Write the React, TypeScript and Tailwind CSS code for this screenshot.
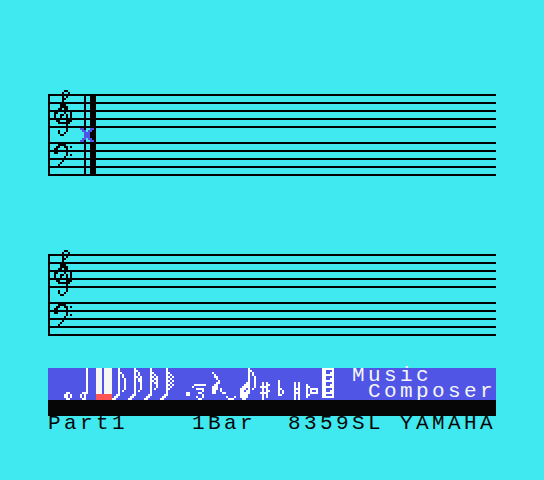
const Pixels = ({ col, row, rows, fill = "#ffffff" }: { col: number; row: number; rows: string[]; fill?: string }) => (
  <>
    {rows.flatMap((line, r) =>
      line.split("").map((ch, c) =>
        ch === "#" ? <rect key={`${r}-${c}`} x={(col + c) * 2} y={(row + r) * 2} width="2" height="2" fill={fill} /> : null
      )
    )}
  </>
)

const treble = [
  ".....##.",
  "....#..#",
  "....#..#",
  "....#.#.",
  "....##..",
  "....#...",
  "...##...",
  "...###..",
  "...####.",
  "..##.##.",
  ".##..#.#",
  "##...#..#",
  "#..##.#.#",
  "#..#..#.#",
  "##.#..#.#",
  ".##...###",
  "..######.",
  "......#.",
  "......#.",
  "......#.",
  "..#...#.",
  "..#..#..",
  "...##...",
]

const bass = [
  "...###..",
  "..####..",
  ".##..##.#",
  "##....#.",
  "##....#.",
  "##....#.",
  "......#.#",
  ".....#..",
  "....#...",
  "....#...",
  "...#....",
  "..#.....",
]

function Staff({ children }: { children?: React.ReactNode }) {
  const lines = [0, 1, 2, 3, 4]
  return (
    <div className="relative flex w-[448px] flex-col gap-[14px] border-l-2 border-black">
      {[0, 1].map((g) => (
        <div key={g} className="flex flex-col gap-[6px]">
          {lines.map((l) => (
            <div key={l} className="h-[2px] bg-black" />
          ))}
        </div>
      ))}
      <svg className="absolute left-[-2px] top-[-4px]" width="60" height="92" viewBox="0 0 60 92" shapeRendering="crispEdges">
        <Pixels col={3} row={0} rows={treble} fill="#000000" />
        <Pixels col={3} row={26} rows={bass} fill="#000000" />
      </svg>
      {children}
    </div>
  )
}

function NotePalette() {
  return (
    <svg width="304" height="32" viewBox="0 0 304 32" shapeRendering="crispEdges">
      <Pixels col={8} row={12} rows={[".##.", "##.#", "##.#", ".##."]} />
      <Pixels col={16} row={0} rows={[...Array(12).fill("...#"), ".###", "#.#.", "#.#.", ".##."]} />
      <rect x="48" y="0" width="6" height="26" fill="#f6f6f6" />
      <rect x="56" y="0" width="8" height="26" fill="#f6f6f6" />
      <rect x="48" y="26" width="16" height="6" fill="#fc5554" />
      <Pixels col={32} row={0} rows={["...#", "...#", "...##", "...#.#", "...#.#", "...#..#", "...#..#", "...#..#", "...#..#", "...#..#", "...#..#", "...#.#", "...#", "..##", ".##.", "##.."]} />
      <Pixels col={40} row={0} rows={["...#", "...##", "...#.#", "...#.#", "...##.#", "...#.##", "...#.##", "...#..#", "...#..#", "...#..#", "...#..#", "...#.#", "...#", "..##", ".##.", "##.."]} />
      <Pixels col={48} row={0} rows={["...#", "...#", "...##", "...#.#", "...##.#", "...#.##", "...##.#", "...#.##", "...#..#", "...#..#", "...#.#", "...#", "...#", "..##", ".##.", "##.."]} />
      <Pixels col={56} row={0} rows={["...#", "...#", "...##", "...#.#", "...##.#", "...#.#", "...##.#", "...#.#", "...##.#", "...#.#", "...##", "...#", "...#", "..##", ".##.", "##.."]} />
      <Pixels col={69} row={12} rows={["##", "##"]} />
      <Pixels col={72} row={8} rows={[".######", "#......", "..####.", ".....#.", "...##..", ".....#.", "..#..#.", "...##.."]} />
      <Pixels col={82} row={2} rows={["#....", ".#...", ".##..", "..#..", "...#.", "..##.", ".##..", "###..", "###.#", "##..#", "##...##"]} />
      <Pixels col={89} row={14} rows={["#...#", ".###."]} />
      <Pixels col={96} row={0} rows={["....#", "....##", "....#.#", "....#.#", "....#..#", "....#..#", "....#..#", "...##..#", "..###..#", ".####..#", "###.#.#", "##.##", "#####", "####", "####", ".##"]} />
      <Pixels col={106} row={7} rows={[".#.#.", ".#.##", "####.", ".#.#.", ".#.##", "####.", ".#.#.", ".#.#.", ".#..."]} />
      <Pixels col={115} row={6} rows={["#..", "#..", "#..", "#..", "##.", "#.#", "#.#", "##."]} />
      <Pixels col={123} row={7} rows={["#.#", "#.#", "#.#", "###", "#.#", "###", "#.#", "#.#", "#.#"]} />
      <Pixels col={129} row={8} rows={["#.....", "##....", "#.####", "#.#..#", "#.####", "##....", "#....."]} />
      <Pixels col={137} row={0} rows={["######", "##...#", "##..##", "######", "##...#", "##..##", "######", "##...#", "##..##", "######", "##...#", "##..##", "######", "##...#", "######"]} />
    </svg>
  )
}

export default function App() {
  return (
    <div className="flex h-[480px] w-[544px] flex-col bg-[#40e8f0] pl-12 pt-[94px] font-['Liberation_Mono',monospace] text-[21px] leading-4 tracking-[3.4px]">
      <Staff>
        {/* double bar with the cursor lying over it */}
        <div className="absolute inset-y-0 left-[34px] flex gap-1">
          <div className="w-[2px] bg-black" />
          <div className="w-[6px] bg-black" />
        </div>
        <svg className="absolute left-[30px] top-[34px]" width="14" height="14" viewBox="0 0 14 14" shapeRendering="crispEdges">
          <Pixels col={0} row={0} fill="#5055e6" rows={["##...##", ".##.##.", "..###..", "..###..", "..###..", ".##.##.", "##...##"]} />
        </svg>
      </Staff>
      <div className="mt-[78px]">
        <Staff />
      </div>
      <div className="mt-8 flex h-8 w-[448px] justify-between bg-[#5055e6] text-[#f6f6f6]">
        <NotePalette />
        <div className="w-36 whitespace-pre">
          <div>Music</div>
          <div>{" Composer"}</div>
        </div>
      </div>
      <div className="h-4 w-[448px] bg-[#060606]" />
      <div className="h-4 w-[448px] whitespace-pre text-[#060606]">Part1    1Bar  8359SL YAMAHA</div>
    </div>
  )
}
